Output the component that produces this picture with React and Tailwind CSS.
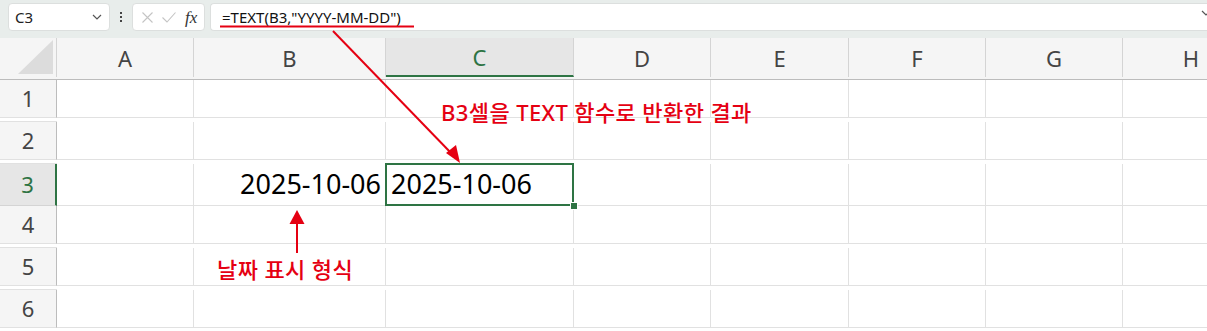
import React from "react";

const cols = ["A", "B", "C", "D", "E", "F", "G", "H"];
const rows = [1, 2, 3, 4, 5, 6];

function Chevron({ className }) {
  return (
    <svg width="10" height="6" viewBox="0 0 10 6" className={className}>
      <path d="M1 1l4 4 4-4" fill="none" stroke="#555" strokeWidth="1.2" />
    </svg>
  );
}

function FormulaBar() {
  return (
    <div className="flex h-[38px] items-start gap-0 bg-[#e8edeb] pt-[3px] pl-[8px]">
      <div className="flex h-[28px] w-[102px] items-center justify-between rounded-[4px] border border-[#dcdfde] bg-white pl-[6px] pr-[7px]">
        <span className="text-[15px] text-[#222]">C3</span>
        <Chevron />
      </div>
      <div className="flex h-[28px] w-[22px] flex-col items-center justify-center gap-[2px]">
        <span className="h-[2px] w-[2px] bg-[#444]" />
        <span className="h-[2px] w-[2px] bg-[#444]" />
        <span className="h-[2px] w-[2px] bg-[#444]" />
      </div>
      <div className="flex h-[28px] w-[73px] items-center gap-[9px] rounded-[4px] border border-[#dcdfde] bg-white pl-[9px]">
        <svg width="11" height="11" viewBox="0 0 11 11">
          <path d="M0.5 0.5l10 10M10.5 0.5l-10 10" stroke="#c4c4c4" strokeWidth="1.1" />
        </svg>
        <svg width="14" height="11" viewBox="0 0 14 11">
          <path d="M0.5 5.5l4.5 4.5 8.5-9.5" fill="none" stroke="#c4c4c4" strokeWidth="1.1" />
        </svg>
        <span className="font-['Liberation_Serif'] text-[17px] italic leading-none text-[#333]">fx</span>
      </div>
      <div className="ml-[5px] flex h-[28px] flex-1 items-center justify-between rounded-l-[4px] border border-r-0 border-[#dcdfde] bg-white pl-[11px]">
        <span className="text-[15px] text-[#111]">=TEXT(B3,"YYYY-MM-DD")</span>
        <Chevron className="mr-[-4px] mb-[8px]" />
      </div>
    </div>
  );
}

const colWidths = "grid-cols-[57px_137px_192px_188px_137px_138px_137px_137px_137px]";

function Header() {
  return (
    <div className={`grid h-[42px] ${colWidths} border-b border-[#bcbcbc] bg-[#f5f5f5]`}>
      <div className="flex items-end justify-end border-r border-[#d4d4d4] pr-[3px] pb-[3px]">
        <svg width="35" height="34" viewBox="0 0 35 34">
          <path d="M35 0V34H0Z" fill="#dcdcdc" />
        </svg>
      </div>
      {cols.map((c) => (
        <div
          key={c}
          className={`flex items-center justify-center border-r border-[#d4d4d4] text-[22px] ${
            c === "C" ? "border-b-2 border-b-[#2e7444] bg-[#e6e6e6] text-[#2e7444]" : "text-[#444]"
          }`}
        >
          <span className="pt-[2px]">{c}</span>
        </div>
      ))}
      <div />
    </div>
  );
}

function Row({ n }) {
  const sel = n === 3;
  return (
    <div className={`grid h-[42px] ${colWidths}`}>
      <div
        className={`flex items-center justify-center border-b text-[22px] ${
          sel
            ? "border-r-2 border-b-[#d4d4d4] border-r-[#2e7444] bg-[#e6e6e6] text-[#2e7444]"
            : "border-r border-b-[#e1e1e1] border-r-[#bcbcbc] bg-[#f5f5f5] text-[#444]"
        }`}
      >
        {n}
      </div>
      {cols.map((c) => (
        <div key={c} className={`relative border-r border-b border-[#e1e1e1] ${sel && c === "C" ? "z-10" : ""}`}>
          {sel && c === "B" && (
            <div className="flex h-full items-center justify-end pr-[4px] text-[27px] text-black">2025-10-06</div>
          )}
          {sel && c === "C" && (
            <>
              <div className="absolute -top-px -left-px right-[-1px] bottom-[-1px] border-2 border-[#2e7444]" />
              <div className="absolute right-[-5px] bottom-[-5px] h-[8px] w-[8px] border border-white bg-[#2e7444]" />
              <div className="flex h-full items-center pl-[5px] text-[27px] text-black">2025-10-06</div>
            </>
          )}
        </div>
      ))}
      <div className="border-b border-[#e1e1e1]" />
    </div>
  );
}

function Annotations() {
  return (
    <>
      <svg className="pointer-events-none absolute left-0 top-0 z-20" width="1207" height="331">
        <line x1="220" y1="26.5" x2="414" y2="26.5" stroke="#e50012" strokeWidth="2" />
        <line x1="333" y1="31" x2="452" y2="154" stroke="#e50012" strokeWidth="2" />
        <path d="M460 163 L446 153 L456 145 Z" fill="#e50012" />
        <line x1="297" y1="253" x2="297" y2="220" stroke="#e50012" strokeWidth="2" />
        <path d="M297 210 L304.5 224 L289.5 224 Z" fill="#e50012" />
      </svg>
      <div className="pointer-events-none absolute left-[441px] top-[101px] z-20 text-[22px] font-medium leading-none tracking-[0.4px] text-[#e50012]">
        B3셀을 TEXT 함수로 반환한 결과
      </div>
      <div className="pointer-events-none absolute left-[217px] top-[258px] z-20 text-[22px] font-medium leading-none tracking-[0.4px] text-[#e50012]">
        날짜 표시 형식
      </div>
    </>
  );
}

export default function App() {
  return (
    <div className="relative h-[331px] w-[1207px] overflow-hidden bg-white font-['Noto_Sans','Noto_Sans_CJK_KR',sans-serif]">
      <FormulaBar />
      <Header />
      {rows.map((n) => (
        <Row key={n} n={n} />
      ))}
      <Annotations />
    </div>
  );
}
